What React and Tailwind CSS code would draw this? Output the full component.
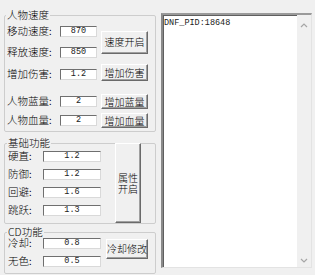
const cjk = "font-['Noto_Sans_CJK_SC','Noto_Sans',sans-serif] font-light";

function Box({ value, className }) {
  return (
    <div
      className={
        "h-[11px] bg-white border border-t-[#6f6f6f] border-l-[#6f6f6f] border-r-[#d9d9d9] border-b-[#d9d9d9] flex items-center justify-center font-['Liberation_Mono',monospace] text-[8.5px] leading-none text-[#222] " +
        className
      }
    >
      {value}
    </div>
  );
}

function Btn({ children, className }) {
  return (
    <div
      className={
        "bg-[#f0f0f0] border border-t-white border-l-white border-r-[#6a6a6a] border-b-[#6a6a6a] shadow-[inset_-1px_-1px_0_#a0a0a0] flex items-center justify-center text-[10px] leading-[10px] text-black whitespace-nowrap " +
        className
      }
    >
      {children}
    </div>
  );
}

function Row({ label, value, labelW, boxW }) {
  return (
    <div className="flex items-center">
      <span className={"text-[10.5px] leading-none whitespace-nowrap " + labelW}>{label}</span>
      <Box value={value} className={boxW} />
    </div>
  );
}

function Legend({ children, className }) {
  return <legend className={"px-[1px] text-[10.5px] leading-[12px] " + className}>{children}</legend>;
}

export default function App() {
  return (
    <div className={"w-[315px] h-[275px] bg-[#f0f0f0] flex items-start overflow-hidden text-black " + cjk}>
      <div className="ml-[4px] mt-[9px] w-[152px] flex flex-col">
        {/* 人物速度 */}
        <fieldset className="h-[123px] border border-[#cdcdcd] rounded-[2px] pl-[2px]">
          <Legend className="-ml-[1px]">人物速度</Legend>
          <div className="flex items-center mt-[5px]">
            <div className="flex flex-col gap-[10px]">
              <Row label="移动速度:" value="870" labelW="w-[53px]" boxW="w-[37px]" />
              <Row label="释放速度:" value="850" labelW="w-[53px]" boxW="w-[37px]" />
            </div>
            <Btn className="ml-[4px] w-[47px] h-[23px]">速度开启</Btn>
          </div>
          <div className="flex items-end mt-[6px]">
            <div className="mb-[1px]">
              <Row label="增加伤害:" value="1.2" labelW="w-[53px]" boxW="w-[37px]" />
            </div>
            <Btn className="ml-[4px] w-[47px] h-[17px]">增加伤害</Btn>
          </div>
          <div className="flex items-center mt-[13px]">
            <Row label="人物蓝量:" value="2" labelW="w-[53px]" boxW="w-[37px]" />
            <Btn className="ml-[4px] w-[47px] h-[15px]">增加蓝量</Btn>
          </div>
          <div className="flex items-center mt-[4px]">
            <Row label="人物血量:" value="2" labelW="w-[53px]" boxW="w-[37px]" />
            <Btn className="ml-[4px] w-[47px] h-[15px]">增加血量</Btn>
          </div>
        </fieldset>

        {/* 基础功能 */}
        <fieldset className="mt-[5px] h-[87px] border border-[#cdcdcd] rounded-[2px] pl-[3px]">
          <Legend className="-ml-[1px]">基础功能</Legend>
          <div className="flex items-start mt-[2px]">
            <div className="flex flex-col gap-[7px]">
              <Row label="硬直:" value="1.2" labelW="w-[35px]" boxW="w-[58px]" />
              <Row label="防御:" value="1.2" labelW="w-[35px]" boxW="w-[58px]" />
              <Row label="回避:" value="1.6" labelW="w-[35px]" boxW="w-[58px]" />
              <Row label="跳跃:" value="1.3" labelW="w-[35px]" boxW="w-[58px]" />
            </div>
            <Btn className="ml-[14px] -mt-[8px] w-[26px] h-[80px] flex-col">
              <span className="leading-[11px]">属性</span>
              <span className="leading-[11px]">开启</span>
            </Btn>
          </div>
        </fieldset>

        {/* CD功能 */}
        <fieldset className="mt-[2px] h-[48px] border border-[#cdcdcd] rounded-[2px] pl-[3px]">
          <Legend className="-ml-[1px]">CD功能</Legend>
          <div className="flex items-start">
            <div className="flex flex-col gap-[7px]">
              <Row label="冷却:" value="0.8" labelW="w-[35px]" boxW="w-[58px]" />
              <Row label="无色:" value="0.5" labelW="w-[35px]" boxW="w-[58px]" />
            </div>
            <Btn className="ml-[5px] mt-[1px] w-[42px] h-[20px]">冷却修改</Btn>
          </div>
        </fieldset>
      </div>

      {/* log panel */}
      <div className="ml-[5px] mt-[13px] w-[151px] h-[255px] flex bg-white border-t-2 border-l-2 border-t-[#9a9a9a] border-l-[#8a8a8a] border-r border-b border-r-[#e3e3e3] border-b-[#e3e3e3] shadow-[inset_1px_1px_0_#5f5f5f]">
        <div className="flex-1 pl-[1px] pt-[3px] font-['Liberation_Mono',monospace] text-[8.5px] leading-[10px] text-[#222]">
          DNF_PID:18648
        </div>
        <div className="w-[14px] bg-[#f0f0f0] flex flex-col justify-between items-center pt-[8px] pb-[4px]">
          <svg width="8" height="5" viewBox="0 0 8 5">
            <path d="M1 4 L4 1 L7 4" fill="none" stroke="#a6a6a6" strokeWidth="1.2" />
          </svg>
          <svg width="8" height="5" viewBox="0 0 8 5">
            <path d="M1 1 L4 4 L7 1" fill="none" stroke="#a6a6a6" strokeWidth="1.2" />
          </svg>
        </div>
      </div>
    </div>
  );
}
